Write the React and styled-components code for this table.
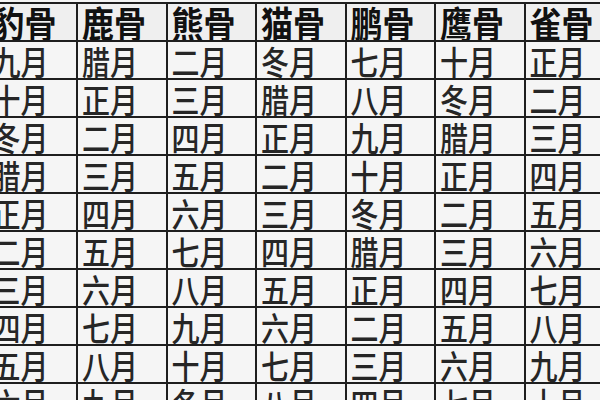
import React from 'react'
import styled, { createGlobalStyle } from 'styled-components'

const GlobalStyle = createGlobalStyle`
	html, body {
		margin: 0;
		padding: 0;
		width: 600px;
		height: 400px;
		overflow: hidden;
		background: #f4f4f4;
		font-family: "Noto Sans CJK SC", "Noto Sans", sans-serif;
	}
`

// 表格外框，深色背景 + gap 形成格线
const Grid = styled.div`
	display: grid;
	grid-template-columns: repeat(7, 87.5px);
	grid-auto-rows: 36px;
	gap: 2px;
	padding: 2px;
	margin: 2px 0 0 -13.5px;
	width: max-content;
	background: #1e1e1e;
`

const Cell = styled.div`
	background: ${p => (p.$head ? '#efefef' : '#f5f5f5')};
	padding-left: 4px;
	padding-top: ${p => (p.$head ? '4px' : '7px')};
	box-sizing: border-box;
	white-space: nowrap;
	overflow: hidden;
`

// 原图字形偏瘦高，用 scaleY 拉长
const Word = styled.span`
	display: inline-block;
	color: ${p => (p.$head ? '#111' : '#262626')};
	font-size: ${p => (p.$head ? '32px' : '28px')};
	font-weight: ${p => (p.$head ? 700 : 500)};
	line-height: ${p => (p.$head ? '32px' : '30px')};
	transform: scaleY(${p => (p.$head ? 1.15 : 1.17)});
	transform-origin: bottom left;
`

const heads = ['豹骨', '鹿骨', '熊骨', '猫骨', '鹏骨', '鹰骨', '雀骨']

const rows = [
	['九月', '腊月', '二月', '冬月', '七月', '十月', '正月'],
	['十月', '正月', '三月', '腊月', '八月', '冬月', '二月'],
	['冬月', '二月', '四月', '正月', '九月', '腊月', '三月'],
	['腊月', '三月', '五月', '二月', '十月', '正月', '四月'],
	['正月', '四月', '六月', '三月', '冬月', '二月', '五月'],
	['二月', '五月', '七月', '四月', '腊月', '三月', '六月'],
	['三月', '六月', '八月', '五月', '正月', '四月', '七月'],
	['四月', '七月', '九月', '六月', '二月', '五月', '八月'],
	['五月', '八月', '十月', '七月', '三月', '六月', '九月'],
	['六月', '九月', '冬月', '八月', '四月', '七月', '十月'],
]

export default function App() {
	return (
		<>
			<GlobalStyle />
			<Grid>
				{heads.map(h => (
					<Cell $head key={h}><Word $head>{h}</Word></Cell>
				))}
				{rows.map((r, i) =>
					r.map((m, j) => (
						<Cell key={i + '-' + j}><Word>{m}</Word></Cell>
					))
				)}
			</Grid>
		</>
	)
}
